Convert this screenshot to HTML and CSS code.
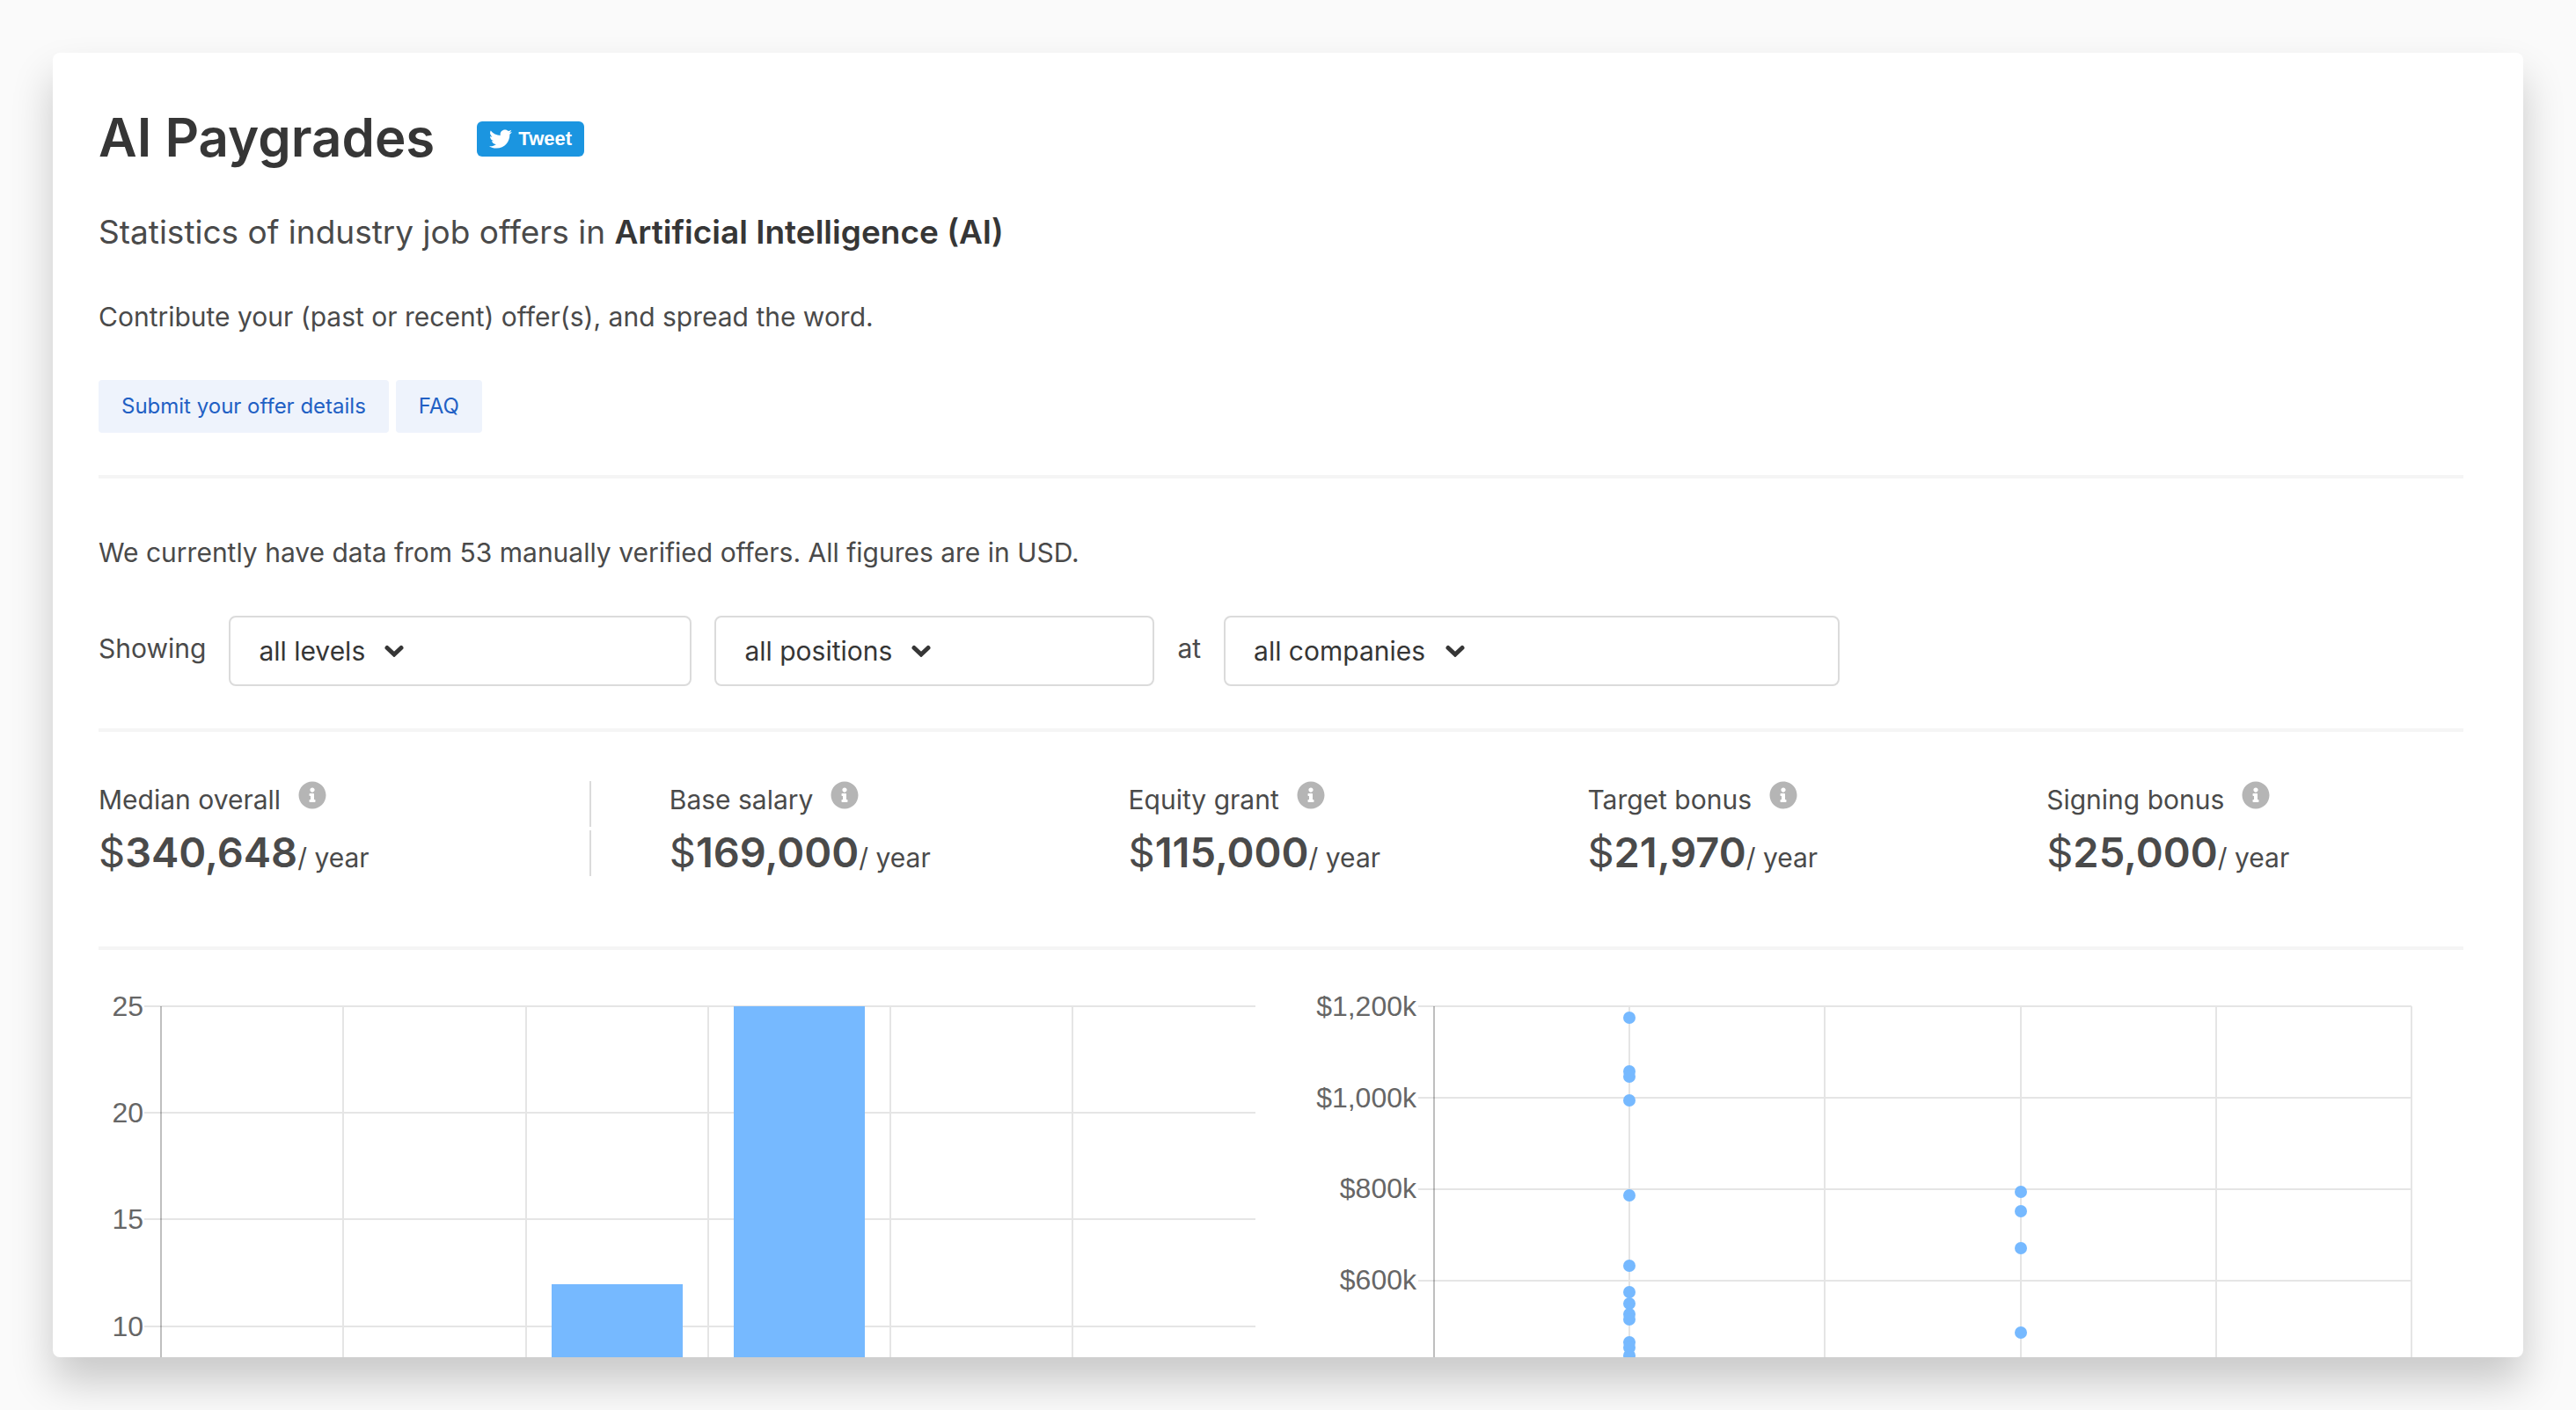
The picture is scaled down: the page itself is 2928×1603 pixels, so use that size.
FILE: index.html
```html
<!DOCTYPE html>
<html lang="en">
<head>
<meta charset="utf-8">
<title>AI Paygrades</title>
<link rel="stylesheet" href="styles.css">
</head>
<body>
<svg class="defs" aria-hidden="true">
  <symbol id="chevron" viewBox="0 0 22 14"><path d="M3 3.500l8 7.500 8-7.500" fill="none" stroke="currentColor" stroke-width="5" stroke-linecap="round"/></symbol>
  <symbol id="info" viewBox="0 0 512 512"><path fill="currentColor" d="M256 8C119 8 8 119.100 8 256c0 137 111 248 248 248s248-111 248-248C504 119.100 393 8 256 8zm0 110c23.200 0 42 18.800 42 42s-18.800 42-42 42-42-18.800-42-42 18.800-42 42-42zm56 254c0 6.600-5.400 12-12 12h-88c-6.600 0-12-5.400-12-12v-24c0-6.600 5.400-12 12-12h12v-64h-12c-6.600 0-12-5.400-12-12v-24c0-6.600 5.400-12 12-12h64c6.600 0 12 5.400 12 12v100h12c6.600 0 12 5.400 12 12v24z"/></symbol>
</svg>
<main class="card">
  <header class="title-row">
    <h1 class="title">AI Paygrades</h1>
    <a class="tweet" href="#tweet">
      <svg class="bird" viewBox="0 0 24 24" aria-hidden="true"><path fill="currentColor" d="M23.954 4.569c-.885.389-1.830.654-2.825.775 1.014-.611 1.794-1.574 2.163-2.723-.951.555-2.005.959-3.127 1.184-.896-.959-2.173-1.559-3.591-1.559-2.717 0-4.920 2.203-4.920 4.917 0 .390.045.765.127 1.124C7.691 8.094 4.066 6.130 1.640 3.161c-.427.722-.666 1.561-.666 2.475 0 1.710.870 3.213 2.188 4.096-.807-.026-1.566-.248-2.228-.616v.061c0 2.385 1.693 4.374 3.946 4.827-.413.111-.849.171-1.296.171-.314 0-.615-.030-.916-.086.631 1.953 2.445 3.377 4.604 3.417-1.680 1.319-3.809 2.105-6.102 2.105-.390 0-.779-.023-1.170-.067 2.189 1.394 4.768 2.209 7.557 2.209 9.054 0 13.999-7.496 13.999-13.986 0-.209 0-.420-.015-.630.961-.689 1.800-1.560 2.460-2.548l-.047-.020z"/></svg>
      <span>Tweet</span>
    </a>
  </header>
  <p class="subtitle">Statistics of industry job offers in <strong>Artificial Intelligence (AI)</strong></p>
  <p class="lead">Contribute your (past or recent) offer(s), and spread the word.</p>
  <nav class="actions">
    <a class="action" href="#submit">Submit your offer details</a>
    <a class="action" href="#faq">FAQ</a>
  </nav>
  <hr class="rule">
  <p class="summary">We currently have data from 53 manually verified offers. All figures are in USD.</p>
  <form class="filters">
    <span class="filter-word">Showing</span>
    <label class="filter levels"><select aria-label="Level"><option>all levels</option></select><svg class="chevron" aria-hidden="true"><use href="#chevron"/></svg></label>
    <label class="filter positions"><select aria-label="Position"><option>all positions</option></select><svg class="chevron" aria-hidden="true"><use href="#chevron"/></svg></label>
    <span class="filter-word">at</span>
    <label class="filter companies"><select aria-label="Company"><option>all companies</option></select><svg class="chevron" aria-hidden="true"><use href="#chevron"/></svg></label>
  </form>
  <hr class="rule">
  <dl class="stats">
    <div class="stat stat-main">
      <dt class="stat-label">Median overall <svg class="info" aria-hidden="true"><use href="#info"/></svg></dt>
      <dd class="stat-value"><span class="currency">$</span><b class="amount">340,648</b><span class="per">/ year</span></dd>
    </div>
    <div class="stat">
      <dt class="stat-label">Base salary <svg class="info" aria-hidden="true"><use href="#info"/></svg></dt>
      <dd class="stat-value"><span class="currency">$</span><b class="amount">169,000</b><span class="per">/ year</span></dd>
    </div>
    <div class="stat">
      <dt class="stat-label">Equity grant <svg class="info" aria-hidden="true"><use href="#info"/></svg></dt>
      <dd class="stat-value"><span class="currency">$</span><b class="amount">115,000</b><span class="per">/ year</span></dd>
    </div>
    <div class="stat">
      <dt class="stat-label">Target bonus <svg class="info" aria-hidden="true"><use href="#info"/></svg></dt>
      <dd class="stat-value"><span class="currency">$</span><b class="amount">21,970</b><span class="per">/ year</span></dd>
    </div>
    <div class="stat">
      <dt class="stat-label">Signing bonus <svg class="info" aria-hidden="true"><use href="#info"/></svg></dt>
      <dd class="stat-value"><span class="currency">$</span><b class="amount">25,000</b><span class="per">/ year</span></dd>
    </div>
  </dl>
  <hr class="rule">
  <section class="charts">
    <svg class="chart" viewBox="0 0 1320 460" role="img" aria-label="Number of offers">
      <path class="grid" d="M52 36H1315M52 157H1315M52 278H1315M52 400H1315M278 36V460M486 36V460M693 36V460M900 36V460M1107 36V460"/>
      <path class="axis" d="M71 36V460"/>
      <path class="bars" d="M515 352h149v108h-149zM722 36h149v424h-149z"/>
      <g class="ticks">
        <text x="51" y="47">25</text>
        <text x="51" y="168">20</text>
        <text x="51" y="289">15</text>
        <text x="51" y="411">10</text>
      </g>
    </svg>
    <svg class="chart" viewBox="0 0 1320 460" role="img" aria-label="Offer amounts">
      <path class="grid" d="M132 36H1261M132 140H1261M132 244H1261M132 348H1261M372 36V460M594 36V460M817 36V460M1039 36V460M1261 36V460"/>
      <path class="axis" d="M150 36V460"/>
      <g class="dots">
        <circle cx="372" cy="49" r="7"/>
        <circle cx="372" cy="110" r="7"/>
        <circle cx="372" cy="116" r="7"/>
        <circle cx="372" cy="143" r="7"/>
        <circle cx="372" cy="251" r="7"/>
        <circle cx="372" cy="331" r="7"/>
        <circle cx="372" cy="361" r="7"/>
        <circle cx="372" cy="374" r="7"/>
        <circle cx="372" cy="386" r="7"/>
        <circle cx="372" cy="392" r="7"/>
        <circle cx="372" cy="418" r="7"/>
        <circle cx="372" cy="424" r="7"/>
        <circle cx="372" cy="433" r="7"/>
        <circle cx="817" cy="247" r="7"/>
        <circle cx="817" cy="269" r="7"/>
        <circle cx="817" cy="311" r="7"/>
        <circle cx="817" cy="407" r="7"/>
      </g>
      <g class="ticks">
        <text x="130" y="47">$1,200k</text>
        <text x="130" y="151">$1,000k</text>
        <text x="130" y="254">$800k</text>
        <text x="130" y="358">$600k</text>
      </g>
    </svg>
  </section>
</main>
</body>
</html>
```

FILE: styles.css
```css
* {
  box-sizing: border-box;
  margin: 0;
  padding: 0;
}

body {
  height: 100vh;
  padding: 60px;
  overflow: hidden;
  background: #fafafa;
  color: #4a4a4a;
  font: 30px/48px Inter, "Liberation Sans", sans-serif;
}

.defs {
  display: none;
}

.card {
  height: 100%;
  padding: 60px 68px 0 52px;
  overflow: hidden;
  border-radius: 8px;
  background: #fff;
  box-shadow: 0 28px 48px rgba(0, 0, 0, 0.2);
}

.title-row {
  display: flex;
  align-items: center;
  gap: 48px;
}

.title {
  color: #363636;
  font-size: 60px;
  font-weight: 600;
  line-height: 72px;
}

.tweet {
  display: flex;
  align-items: center;
  gap: 7px;
  height: 40px;
  margin-top: 4px;
  padding: 0 14px;
  border-radius: 6px;
  background: #1b95e0;
  color: #fff;
  font: bold 22px/40px "Liberation Sans", Arial, sans-serif;
  text-decoration: none;
}

.bird {
  width: 26px;
  height: 26px;
}

.subtitle {
  margin-top: 48px;
  font-size: 37px;
}

.subtitle strong {
  color: #363636;
  font-weight: 600;
}

.lead,
.actions,
.filters {
  margin-top: 48px;
}

.actions {
  display: flex;
  gap: 8px;
}

.action {
  padding: 0 26px;
  border-radius: 4px;
  background: #eef3fc;
  color: #2160c4;
  font-size: 24px;
  line-height: 60px;
  text-decoration: none;
}

.rule {
  height: 4px;
  margin-top: 48px;
  border: 0;
  background: #f5f5f5;
}

.summary {
  margin-top: 60px;
}

.filters {
  display: flex;
  align-items: center;
  gap: 26px;
}

.filter-word {
  padding-bottom: 6px;
}

.filter {
  display: flex;
  align-items: center;
  gap: 22px;
  height: 80px;
  padding: 0 32px;
  border: 2px solid #dbdbdb;
  border-radius: 8px;
  color: #363636;
}

.levels {
  width: 526px;
}

.positions {
  width: 500px;
}

.companies {
  width: 700px;
}

.filter select {
  border: 0;
  background: none;
  color: inherit;
  font: inherit;
  appearance: none;
}

.chevron {
  width: 22px;
  height: 14px;
}

.stats {
  display: grid;
  grid-template-columns: 649fr repeat(4, 522fr);
  margin: 56px -24px 0;
}

.stat {
  display: grid;
  gap: 4px;
  padding: 0 24px;
}

.stat-main {
  padding-right: 65px;
}

.stat-label,
.stat-value {
  display: flex;
  height: 52px;
}

.stat-label {
  gap: 20px;
  line-height: 42px;
}

.stat-value {
  align-items: baseline;
}

.stat-main .stat-label,
.stat-main .stat-value {
  border-right: 2px solid #dbdbdb;
}

.info {
  width: 32px;
  height: 32px;
  color: #b5b5b5;
}

.currency,
.amount {
  font-size: 47px;
  font-weight: 400;
  line-height: 50px;
}

.amount {
  font-weight: 600;
}

.stats + .rule {
  margin-top: 80px;
}

.charts {
  display: grid;
  grid-template-columns: 1fr 1fr;
  gap: 48px;
  margin-top: 28px;
}

.chart {
  width: 100%;
}

.grid,
.axis {
  fill: none;
  stroke: rgba(0, 0, 0, 0.1);
  stroke-width: 2;
}

.axis {
  stroke: rgba(0, 0, 0, 0.25);
}

.bars,
.dots {
  fill: #76b9ff;
}

.ticks {
  fill: #666;
  font: 32px "Liberation Sans", Arial, sans-serif;
  text-anchor: end;
}
```
